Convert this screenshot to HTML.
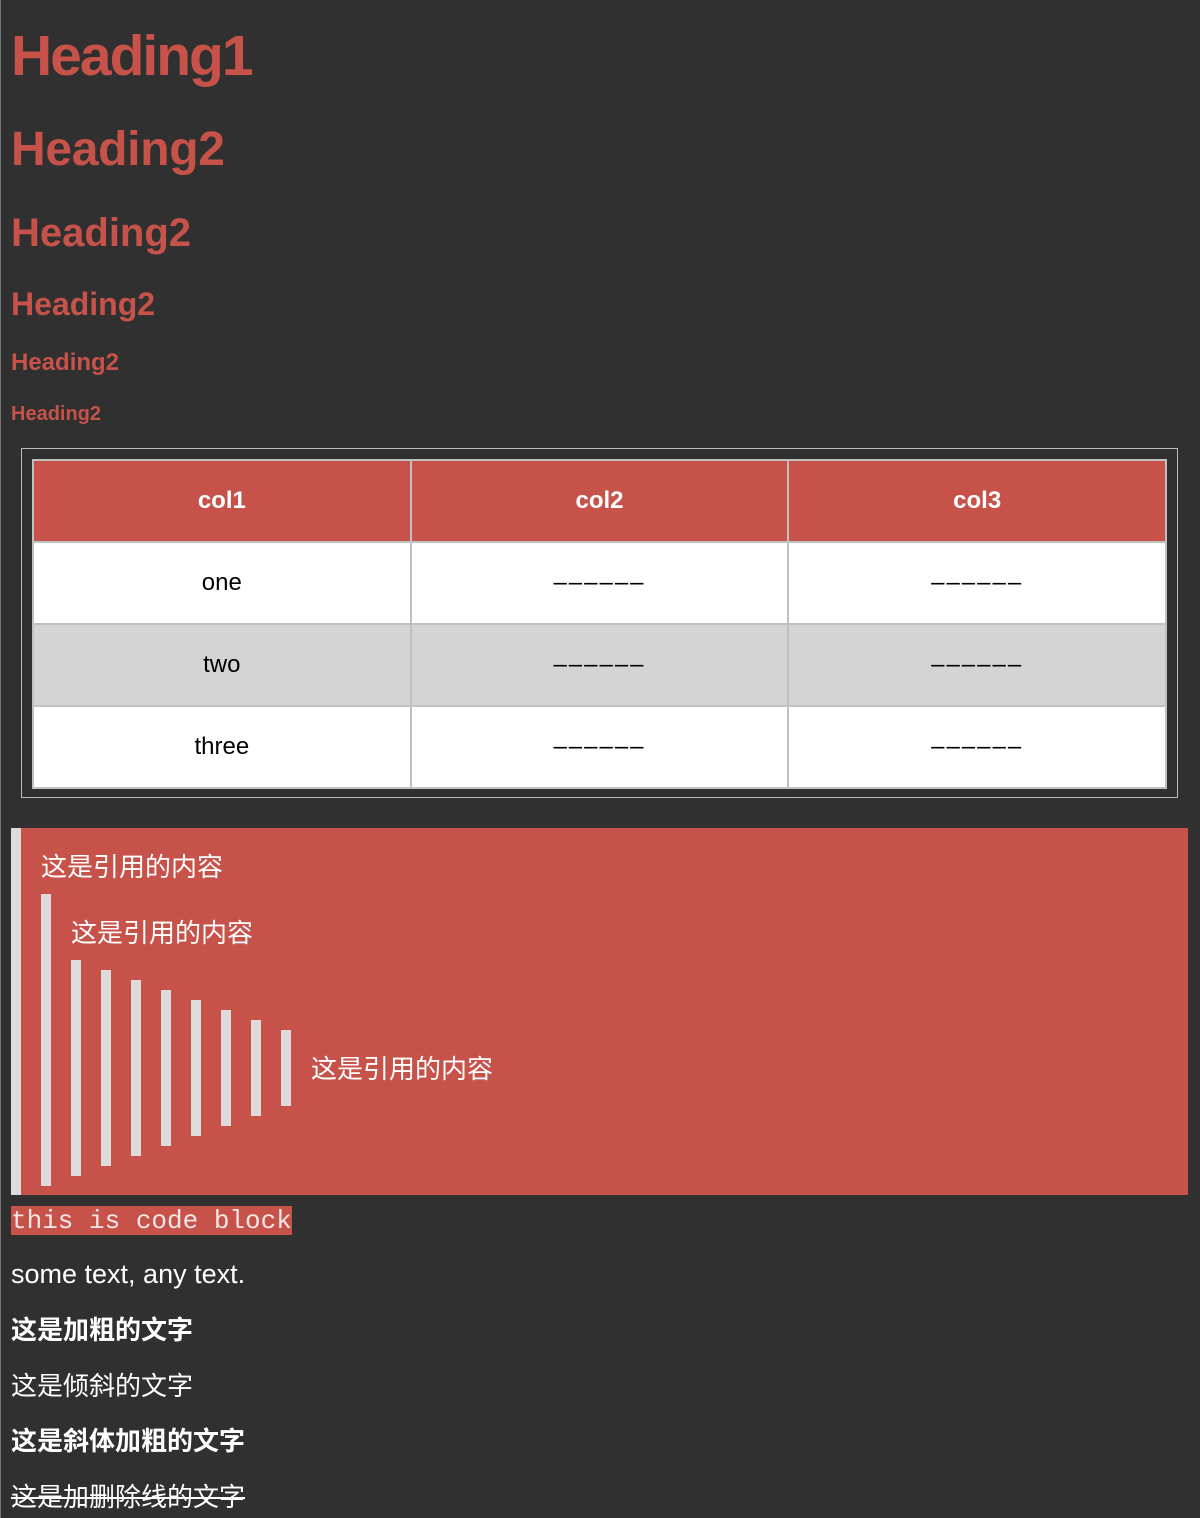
<!DOCTYPE html>
<html><head><meta charset="utf-8"><style>
*{margin:0;padding:0;box-sizing:border-box}
body{width:1200px;height:1518px;background:#303030;position:relative;overflow:hidden;font-family:"Liberation Sans","Noto Sans CJK SC",sans-serif}
.a{position:absolute;white-space:nowrap;line-height:1}
.h{color:#c7524a;font-weight:bold;left:11px}
.bar{position:absolute;width:10px;background:#dcdcdc}
.q{position:absolute;color:#fff;font-size:26px;line-height:1;white-space:nowrap}
table{position:absolute;left:32px;top:459px;width:1135px;border-collapse:collapse;table-layout:fixed}
td,th{height:82px;border:2px solid #c0c0c0;text-align:center;font-size:24px;font-weight:normal;color:#000}
th{background:#c7524a;color:#fff;font-weight:bold}
tr.w td{background:#fff}tr.g td{background:#d4d4d4}
.d{letter-spacing:2px}
.t{position:absolute;left:11px;color:#fff;font-size:26px;line-height:1;white-space:nowrap}
</style></head><body>
<div style="position:absolute;left:0;top:0;width:1px;height:1518px;background:#777"></div>
<div class="a h" style="top:28px;font-size:57px;letter-spacing:-2px">Heading1</div>
<div class="a h" style="top:126px;font-size:48px;letter-spacing:-0.3px">Heading2</div>
<div class="a h" style="top:213px;font-size:40px">Heading2</div>
<div class="a h" style="top:288px;font-size:32px">Heading2</div>
<div class="a h" style="top:351px;font-size:24px">Heading2</div>
<div class="a h" style="top:404px;font-size:20px">Heading2</div>

<div style="position:absolute;left:21px;top:448px;width:1157px;height:350px;border:1px solid #bbb"></div>
<table>
<tr><th>col1</th><th>col2</th><th>col3</th></tr>
<tr class="w"><td>one</td><td class="d">––––––</td><td class="d">––––––</td></tr>
<tr class="g"><td>two</td><td class="d">––––––</td><td class="d">––––––</td></tr>
<tr class="w"><td>three</td><td class="d">––––––</td><td class="d">––––––</td></tr>
</table>

<div style="position:absolute;left:11px;top:828px;width:1177px;height:367px;background:#c7524a"></div>
<div class="bar" style="left:11px;top:828px;height:367px"></div>
<div class="q" style="left:41px;top:854px">这是引用的内容</div>
<div class="bar" style="left:41px;top:894px;height:292px"></div>
<div class="q" style="left:71px;top:920px">这是引用的内容</div>
<div class="bar" style="left:71px;top:960px;height:216px"></div>
<div class="bar" style="left:101px;top:970px;height:196px"></div>
<div class="bar" style="left:131px;top:980px;height:176px"></div>
<div class="bar" style="left:161px;top:990px;height:156px"></div>
<div class="bar" style="left:191px;top:1000px;height:136px"></div>
<div class="bar" style="left:221px;top:1010px;height:116px"></div>
<div class="bar" style="left:251px;top:1020px;height:96px"></div>
<div class="bar" style="left:281px;top:1030px;height:76px"></div>
<div class="q" style="left:311px;top:1056px">这是引用的内容</div>

<div style="position:absolute;left:11px;top:1206px;width:281px;height:29px;background:#c7524a"></div>
<div class="a" style="left:11px;top:1208px;font-family:'Liberation Mono',monospace;font-size:26px;color:#f3e6e6">this is code block</div>

<div class="t" style="top:1261px;font-size:27px">some text, any text.</div>
<div class="t" style="top:1317px;font-weight:bold">这是加粗的文字</div>
<div class="t" style="top:1373px">这是倾斜的文字</div>
<div class="t" style="top:1428px;font-weight:bold">这是斜体加粗的文字</div>
<div class="t" style="top:1484px;text-decoration:line-through">这是加删除线的文字</div>
</body></html>
